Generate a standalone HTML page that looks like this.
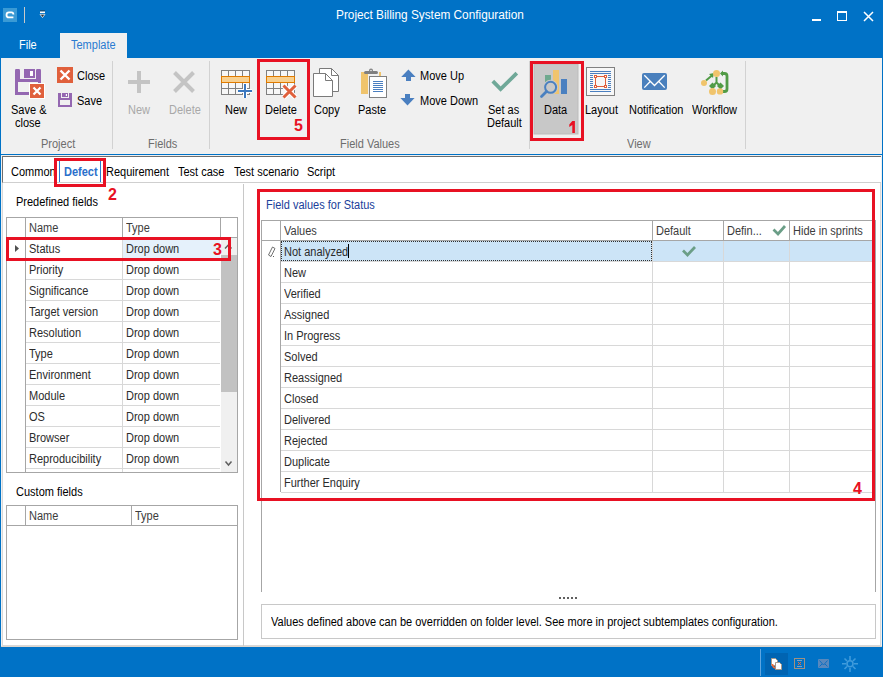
<!DOCTYPE html>
<html><head><meta charset="utf-8">
<style>
*{margin:0;padding:0;box-sizing:border-box}
html,body{width:883px;height:677px;overflow:hidden;background:#0072c6;font-family:"Liberation Sans",sans-serif}
.a{position:absolute}
.t{position:absolute;font-size:12px;line-height:15px;white-space:nowrap;color:#000;transform:scaleX(.917);transform-origin:0 0}
.r{position:absolute;border:3px solid #e81123}
.n{position:absolute;font-size:16px;line-height:16px;font-weight:bold;color:#e81123}
.hl{position:absolute;height:1px}
.vl{position:absolute;width:1px}
svg{position:absolute;overflow:visible}
</style></head><body>
<!-- title bar -->
<div class="a" style="left:3px;top:8px;width:14px;height:14px;background:#3a9ad5"></div>
<div class="vl" style="left:24px;top:7px;height:16px;background:#c9c9c9"></div>
<div class="t" style="left:336px;top:8px;font-size:12px;line-height:14px;color:#fff;transform:scaleX(.985)">Project Billing System Configuration</div>
<!-- min max close -->
<div class="a" style="left:812px;top:19px;width:9px;height:2px;background:#fff"></div>
<div class="a" style="left:837px;top:11px;width:10px;height:10px;border:1px solid #fff;border-top-width:2px"></div>
<!-- tabs -->
<div class="t" style="left:19px;top:38px;color:#fff">File</div>
<div class="a" style="left:60px;top:33px;width:67px;height:25px;background:#f0f0f0"></div>
<div class="t" style="left:71px;top:38px;color:#2a7bd0">Template</div>
<!-- ribbon body -->
<div class="a" style="left:1px;top:58px;width:881px;height:96px;background:#f0f0f0"></div>

<!-- ribbon icons -->
<svg style="left:0;top:0" width="883" height="155" viewBox="0 0 883 155">
 <!-- app icon glyph -->
 <path d="M13.4 14.6 Q13.4 12.4 11.4 12.4 H9 Q6.5 12.4 6.5 14.9 Q6.5 17.4 9 17.4 H13.4" fill="none" stroke="#fff" stroke-width="1.8"/>
 <!-- qat dropdown -->
 <rect x="40" y="10.5" width="5" height="1" fill="#333"/>
 <rect x="40" y="11.5" width="5" height="1.5" fill="#fff"/>
 <path d="M40 14.3 H45 L42.5 17.6 Z" fill="#333" stroke="#fff" stroke-width="0.7"/>
 <!-- close X title -->
 <path d="M864 12 L873 21 M873 12 L864 21" stroke="#fff" stroke-width="1.5"/>
 <!-- separators -->
 <rect x="112" y="61" width="1" height="88" fill="#d2d2d2"/>
 <rect x="209" y="61" width="1" height="88" fill="#d2d2d2"/>
 <rect x="529" y="61" width="1" height="88" fill="#d2d2d2"/>
 <rect x="745" y="61" width="1" height="88" fill="#d2d2d2"/>
 <!-- save & close -->
 <g fill="#9467b1">
  <rect x="15" y="69" width="5" height="13" rx="1.2"/><rect x="15" y="80" width="3" height="15"/>
  <rect x="15" y="79" width="26" height="3"/>
  <rect x="36" y="69" width="5" height="13" rx="1.2"/><rect x="38" y="80" width="3" height="5"/>
  <rect x="24" y="69" width="11" height="9"/>
  <rect x="15" y="92" width="16" height="3" rx="1"/>
 </g>
 <rect x="30" y="71" width="3" height="5" fill="#fff"/>
 <rect x="29" y="83" width="16" height="16" fill="#fff"/>
 <rect x="30" y="84" width="14" height="14" fill="#e0603c"/>
 <path d="M33.5 87.5 L40.5 94.5 M40.5 87.5 L33.5 94.5" stroke="#fff" stroke-width="2.2"/>
 <!-- close small -->
 <rect x="57" y="67" width="16" height="16" fill="#e0603c"/>
 <path d="M60.5 70.5 L69.5 79.5 M69.5 70.5 L60.5 79.5" stroke="#fff" stroke-width="2.4"/>
 <!-- save small -->
 <g fill="#9467b1">
  <rect x="58" y="93" width="3" height="5"/>
  <rect x="58" y="98" width="2" height="9"/>
  <rect x="62" y="93" width="6" height="4"/>
  <rect x="69" y="93" width="3" height="5"/>
  <rect x="70" y="98" width="2" height="9"/>
  <rect x="58" y="98" width="14" height="2"/>
  <rect x="58" y="105" width="14" height="2"/>
 </g>
 <rect x="65.8" y="94" width="1.2" height="2" fill="#fff"/>
 <!-- fields new/delete disabled -->
 <path d="M139 71 V93 M128 82 H150" stroke="#c4c4c4" stroke-width="4"/>
 <path d="M174.5 72.5 L193.5 91.5 M193.5 72.5 L174.5 91.5" stroke="#c4c4c4" stroke-width="4"/>
 <!-- grid new -->
 <g id="grid">
  <rect x="221.5" y="70.5" width="28" height="24" fill="#f7f7f7" stroke="#808080"/>
  <path d="M228.5 70 V95 M235.5 70 V95 M242.5 70 V95 M221 88.5 H250" stroke="#808080"/>
  <rect x="221.5" y="76.5" width="28" height="6" fill="#f8d08f" stroke="#e07b00"/>
 </g>
 <path d="M238 91 H252 M245 84 V98" stroke="#fff" stroke-width="4"/>
 <path d="M238 91 H252 M245 84 V98" stroke="#3b78bf" stroke-width="2"/>
 <!-- grid delete -->
 <use href="#grid" x="45"/>
 <path d="M283.5 85.5 L295.5 97.5 M295.5 85.5 L283.5 97.5" stroke="#fff" stroke-width="5"/>
 <path d="M283.5 85.5 L295.5 97.5 M295.5 85.5 L283.5 97.5" stroke="#e0603c" stroke-width="3"/>
 <!-- copy -->
 <path d="M319.5 68.5 H331.5 L338.5 75.5 V91.5 H319.5 Z" fill="#fff" stroke="#7a7a7a"/>
 <path d="M331.5 68.5 V75.5 H338.5" fill="none" stroke="#7a7a7a"/>
 <path d="M313.5 73.5 H325.5 L332.5 80.5 V96.5 H313.5 Z" fill="#fff" stroke="#7a7a7a"/>
 <path d="M325.5 73.5 V80.5 H332.5" fill="none" stroke="#7a7a7a"/>
 <!-- paste -->
 <rect x="361" y="72" width="7" height="22" fill="#f0c46c"/><rect x="379" y="72" width="2" height="4" fill="#f0c46c"/>
 <rect x="364" y="71" width="14" height="3" rx="1.5" fill="#808080"/>
 <circle cx="371" cy="70.5" r="2" fill="#808080"/>
 <circle cx="371" cy="70.5" r="0.8" fill="#f0f0f0"/>
 <rect x="369.5" y="76.5" width="17" height="21" fill="#fff" stroke="#808080"/>
 <path d="M373 81.5 H383 M373 83.5 H383 M373 85.5 H383 M373 87.5 H383 M373 89.5 H383 M373 91.5 H383" stroke="#4a7fc0"/>
 <!-- move up/down -->
 <path d="M408.4 69.4 L415.6 77 H411 V81 H406 V77 H401.2 Z" fill="#4a7fc0"/>
 <path d="M405 94 H410 V98 H414.6 L407.5 105.4 L400.4 98 H405 Z" fill="#4a7fc0"/>
 <!-- set as default check -->
 <path d="M492.8 81.1 L500.6 89.1 L516.8 73.2" fill="none" stroke="#6fa898" stroke-width="3.8"/>
 <!-- data pressed -->
 <rect x="534" y="64" width="44" height="70" fill="#c8c8c8" stroke="#bcbcbc"/>
 <rect x="545" y="75" width="6" height="10" fill="#6fa98e"/>
 <rect x="553" y="70" width="6" height="24" fill="#f0c46c"/>
 <rect x="561" y="79" width="6" height="15" fill="#4a80c0"/>
 <circle cx="550.6" cy="87.3" r="6.5" fill="none" stroke="#c8c8c8" stroke-width="2"/>
 <circle cx="550.6" cy="87.3" r="5.5" fill="#c8c8c8" stroke="#4a80c0" stroke-width="2"/>
 <path d="M541.5 96.5 L546.5 91.5" stroke="#4a80c0" stroke-width="2.8" stroke-linecap="round"/>
 <!-- layout -->
 <rect x="586.5" y="67.5" width="28" height="28" fill="#f7f7f7" stroke="#808080"/>
 <path d="M590 71.5 H611 M590 73.5 H611 M590 89.5 H611 M590 91.5 H611 M590 75.5 H593 M590 77.5 H593 M590 79.5 H593 M590 81.5 H593 M590 83.5 H593 M590 85.5 H593 M590 87.5 H593 M608 75.5 H611 M608 77.5 H611 M608 79.5 H611 M608 81.5 H611 M608 83.5 H611 M608 85.5 H611 M608 87.5 H611" stroke="#4a7fc0"/>
 <rect x="595.5" y="76.5" width="10" height="10" fill="none" stroke="#e0603c"/>
 <g fill="#fff" stroke="#e0603c"><rect x="594.5" y="75.5" width="2" height="2"/><rect x="604.5" y="75.5" width="2" height="2"/><rect x="594.5" y="85.5" width="2" height="2"/><rect x="604.5" y="85.5" width="2" height="2"/></g>
 <!-- envelope -->
 <rect x="642" y="73" width="25" height="17" rx="2" fill="#4a80bd"/>
 <path d="M644.3 75.2 L654.5 85.5 L664.7 75.2 M644.3 87.6 L650.2 81.5 M664.7 87.6 L658.8 81.5" fill="none" stroke="#fff" stroke-width="1.3"/>
 <!-- workflow -->
 <g stroke="#519b46" stroke-width="2" fill="none">
  <path d="M706 80.5 L712.5 75"/>
  <path d="M716.5 77 V82.5 L712.5 86.5 M716.5 82.5 L720.5 86.5"/>
  <path d="M722 91.5 H724.5 Q727 91.5 727 89 V76 Q727 73.5 724.5 73.5 H721.5" stroke-width="2.8"/>
 </g>
 <g fill="#519b46">
  <path d="M709 74 L714 73 L713 78 Z"/>
  <path d="M709 86 L712.5 89.5 L716 86 L712.5 82.5 Z"/>
  <path d="M717 86 L720.5 89.5 L724 86 L720.5 82.5 Z"/>
  <path d="M723 70.5 L720 73.5 L723 76.5 Z"/>
 </g>
 <g fill="#f0c46c">
  <circle cx="716.5" cy="73.5" r="3.5"/>
  <circle cx="704" cy="82.9" r="3"/>
  <circle cx="712.5" cy="91.4" r="3.5"/>
  <circle cx="720" cy="91.4" r="3.2"/>
 </g>
 <!-- red boxes ribbon -->
 <rect x="258.5" y="60.5" width="50" height="78" fill="none" stroke="#e81123" stroke-width="3"/>
 <rect x="531.5" y="62.5" width="51" height="77" fill="none" stroke="#e81123" stroke-width="3"/>
</svg>
<div class="t" style="left:77px;top:69px">Close</div>
<div class="t" style="left:77px;top:94px">Save</div>
<div class="t" style="left:11px;top:103px">Save &amp;</div>
<div class="t" style="left:15px;top:116px">close</div>
<div class="t" style="left:41px;top:137px;color:#6d6d6d">Project</div>
<div class="t" style="left:128px;top:103px;color:#a8a8a8">New</div>
<div class="t" style="left:169px;top:103px;color:#a8a8a8">Delete</div>
<div class="t" style="left:148px;top:137px;color:#6d6d6d">Fields</div>
<div class="t" style="left:225px;top:103px">New</div>
<div class="t" style="left:265px;top:103px">Delete</div>
<div class="t" style="left:314px;top:103px">Copy</div>
<div class="t" style="left:358px;top:103px">Paste</div>
<div class="t" style="left:420px;top:69px">Move Up</div>
<div class="t" style="left:420px;top:94px">Move Down</div>
<div class="t" style="left:488px;top:103px">Set as</div>
<div class="t" style="left:487px;top:116px">Default</div>
<div class="t" style="left:340px;top:137px;color:#6d6d6d">Field Values</div>
<div class="t" style="left:544px;top:103px">Data</div>
<div class="t" style="left:585px;top:103px">Layout</div>
<div class="t" style="left:629px;top:103px">Notification</div>
<div class="t" style="left:692px;top:103px">Workflow</div>
<div class="t" style="left:627px;top:137px;color:#6d6d6d">View</div>
<div class="n" style="left:294px;top:118px">5</div>
<svg style="left:0;top:0" width="883" height="160"><path d="M572.3 121 H574.9 V133 H572.3 V124.9 L569.3 126.9 V124.5 Z" fill="#e81123"/></svg>

<!-- content area -->
<div class="a" style="left:1px;top:155px;width:881px;height:492px;background:#f0f0f0"></div>
<div class="hl" style="left:1px;top:646px;width:881px;background:#ddd6ce"></div>
<div class="a" style="left:2px;top:156px;width:879px;height:27px;background:#fff;border-top:1px solid #6e6e6e;border-left:1px solid #6e6e6e;border-bottom:1px solid #cfcfcf"></div>
<div class="a" style="left:2px;top:183px;width:879px;height:463px;background:#fff;border-left:1px solid #d8d8d8;border-right:1px solid #d8d8d8;border-bottom:1px solid #d8d8d8"></div>
<!-- tab headers -->
<div class="t" style="left:11px;top:165px">Common</div>
<div class="vl" style="left:59px;top:161px;height:21px;background:#2a7bd0"></div>
<div class="vl" style="left:100px;top:161px;height:21px;background:#2a7bd0"></div>
<div class="t" style="left:64px;top:165px;color:#2a6fcb;font-weight:bold">Defect</div>
<div class="t" style="left:106px;top:165px">Requirement</div>
<div class="t" style="left:178px;top:165px">Test case</div>
<div class="t" style="left:234px;top:165px">Test scenario</div>
<div class="t" style="left:307px;top:165px">Script</div>
<div class="r" style="left:54px;top:158px;width:52px;height:29px"></div>
<div class="n" style="left:108px;top:187px">2</div>
<!-- splitter -->
<div class="vl" style="left:243px;top:184px;height:462px;background:#c8c8c8"></div>

<!-- left panel -->
<div class="t" style="left:16px;top:195px">Predefined fields</div>
<div class="t" style="left:16px;top:485px">Custom fields</div>

<!-- predefined grid -->
<div class="a" style="left:6px;top:217px;width:232px;height:256px;border:1px solid #a6a6a6;background:#fff"></div>
<div class="a" style="left:123px;top:238px;width:97px;height:20px;background:#e5f1fb"></div>
<div class="hl" style="left:7px;top:237px;width:230px;background:#a6a6a6"></div>
<div class="vl" style="left:25px;top:218px;height:254px;background:#a6a6a6"></div>
<div class="vl" style="left:122px;top:218px;height:19px;background:#a6a6a6"></div>
<div class="vl" style="left:220px;top:218px;height:19px;background:#a6a6a6"></div>
<div class="vl" style="left:122px;top:238px;height:234px;background:#d8d8d8"></div>
<div class="hl" style="left:26px;top:258px;width:194px;background:#d8d8d8"></div>
<div class="hl" style="left:26px;top:279px;width:194px;background:#d8d8d8"></div>
<div class="hl" style="left:26px;top:300px;width:194px;background:#d8d8d8"></div>
<div class="hl" style="left:26px;top:321px;width:194px;background:#d8d8d8"></div>
<div class="hl" style="left:26px;top:342px;width:194px;background:#d8d8d8"></div>
<div class="hl" style="left:26px;top:363px;width:194px;background:#d8d8d8"></div>
<div class="hl" style="left:26px;top:384px;width:194px;background:#d8d8d8"></div>
<div class="hl" style="left:26px;top:405px;width:194px;background:#d8d8d8"></div>
<div class="hl" style="left:26px;top:426px;width:194px;background:#d8d8d8"></div>
<div class="hl" style="left:26px;top:447px;width:194px;background:#d8d8d8"></div>
<div class="hl" style="left:26px;top:468px;width:194px;background:#d8d8d8"></div>
<div class="t" style="left:29px;top:221px;color:#3c3c3c">Name</div>
<div class="t" style="left:126px;top:221px;color:#3c3c3c">Type</div>
<div class="t" style="left:29px;top:242px;color:#2b2b2b">Status</div>
<div class="t" style="left:126px;top:242px;color:#2b2b2b">Drop down</div>
<div class="t" style="left:29px;top:263px;color:#2b2b2b">Priority</div>
<div class="t" style="left:126px;top:263px;color:#2b2b2b">Drop down</div>
<div class="t" style="left:29px;top:284px;color:#2b2b2b">Significance</div>
<div class="t" style="left:126px;top:284px;color:#2b2b2b">Drop down</div>
<div class="t" style="left:29px;top:305px;color:#2b2b2b">Target version</div>
<div class="t" style="left:126px;top:305px;color:#2b2b2b">Drop down</div>
<div class="t" style="left:29px;top:326px;color:#2b2b2b">Resolution</div>
<div class="t" style="left:126px;top:326px;color:#2b2b2b">Drop down</div>
<div class="t" style="left:29px;top:347px;color:#2b2b2b">Type</div>
<div class="t" style="left:126px;top:347px;color:#2b2b2b">Drop down</div>
<div class="t" style="left:29px;top:368px;color:#2b2b2b">Environment</div>
<div class="t" style="left:126px;top:368px;color:#2b2b2b">Drop down</div>
<div class="t" style="left:29px;top:389px;color:#2b2b2b">Module</div>
<div class="t" style="left:126px;top:389px;color:#2b2b2b">Drop down</div>
<div class="t" style="left:29px;top:410px;color:#2b2b2b">OS</div>
<div class="t" style="left:126px;top:410px;color:#2b2b2b">Drop down</div>
<div class="t" style="left:29px;top:431px;color:#2b2b2b">Browser</div>
<div class="t" style="left:126px;top:431px;color:#2b2b2b">Drop down</div>
<div class="t" style="left:29px;top:452px;color:#2b2b2b">Reproducibility</div>
<div class="t" style="left:126px;top:452px;color:#2b2b2b">Drop down</div>
<div class="a" style="left:221px;top:238px;width:16px;height:234px;background:#f0f0f0"></div>
<div class="a" style="left:221px;top:255px;width:16px;height:137px;background:#c2c2c2"></div>
<svg style="left:0;top:0" width="883" height="677"><path d="M225 248.5 L228.3 245 L231.5 248.5" fill="none" stroke="#606060" stroke-width="1.5"/><path d="M225.5 461.5 L228.5 465 L231.5 461.5" fill="none" stroke="#606060" stroke-width="1.5"/><path d="M15 245 L19 248.5 L15 252 Z" fill="#505050"/></svg>
<div class="r" style="left:6px;top:237px;width:225px;height:24px"></div>
<div class="n" style="left:213px;top:242px">3</div>
<!-- custom grid -->
<div class="a" style="left:6px;top:505px;width:232px;height:135px;border:1px solid #a6a6a6;background:#fff"></div>
<div class="hl" style="left:7px;top:525px;width:230px;background:#a6a6a6"></div>
<div class="vl" style="left:25px;top:506px;height:19px;background:#a6a6a6"></div>
<div class="vl" style="left:131px;top:506px;height:19px;background:#a6a6a6"></div>
<div class="t" style="left:29px;top:509px;color:#3c3c3c">Name</div>
<div class="t" style="left:135px;top:509px;color:#3c3c3c">Type</div>
<!-- right panel -->
<!-- values grid -->
<div class="vl" style="left:261px;top:220px;height:372px;background:#a6a6a6"></div>
<div class="vl" style="left:875px;top:220px;height:372px;background:#a6a6a6"></div>
<div class="hl" style="left:261px;top:220px;width:615px;background:#a6a6a6"></div>
<div class="a" style="left:281px;top:241px;width:591px;height:20px;background:#cce4f7"></div>
<div class="hl" style="left:262px;top:240px;width:610px;background:#a6a6a6"></div>
<div class="vl" style="left:280px;top:221px;height:271px;background:#a6a6a6"></div>
<div class="vl" style="left:652px;top:221px;height:19px;background:#a6a6a6"></div>
<div class="vl" style="left:652px;top:241px;height:251px;background:#d8d8d8"></div>
<div class="vl" style="left:723px;top:221px;height:19px;background:#a6a6a6"></div>
<div class="vl" style="left:723px;top:241px;height:251px;background:#d8d8d8"></div>
<div class="vl" style="left:789px;top:221px;height:19px;background:#a6a6a6"></div>
<div class="vl" style="left:789px;top:241px;height:251px;background:#d8d8d8"></div>
<div class="hl" style="left:281px;top:261px;width:591px;background:#d8d8d8"></div>
<div class="hl" style="left:281px;top:282px;width:591px;background:#d8d8d8"></div>
<div class="hl" style="left:281px;top:303px;width:591px;background:#d8d8d8"></div>
<div class="hl" style="left:281px;top:324px;width:591px;background:#d8d8d8"></div>
<div class="hl" style="left:281px;top:345px;width:591px;background:#d8d8d8"></div>
<div class="hl" style="left:281px;top:366px;width:591px;background:#d8d8d8"></div>
<div class="hl" style="left:281px;top:387px;width:591px;background:#d8d8d8"></div>
<div class="hl" style="left:281px;top:408px;width:591px;background:#d8d8d8"></div>
<div class="hl" style="left:281px;top:429px;width:591px;background:#d8d8d8"></div>
<div class="hl" style="left:281px;top:450px;width:591px;background:#d8d8d8"></div>
<div class="hl" style="left:281px;top:471px;width:591px;background:#d8d8d8"></div>
<div class="hl" style="left:281px;top:492px;width:591px;background:#d8d8d8"></div>
<div class="a" style="left:281px;top:241px;width:371px;height:20px;border:1px dotted #303030"></div>
<div class="t" style="left:284px;top:224px;color:#3c3c3c">Values</div>
<div class="t" style="left:656px;top:224px;color:#3c3c3c">Default</div>
<div class="t" style="left:727px;top:224px;color:#3c3c3c">Defin...</div>
<div class="t" style="left:793px;top:224px;color:#3c3c3c">Hide in sprints</div>
<div class="t" style="left:284px;top:245px;color:#2b2b2b">Not analyzed</div>
<div class="t" style="left:284px;top:266px;color:#2b2b2b">New</div>
<div class="t" style="left:284px;top:287px;color:#2b2b2b">Verified</div>
<div class="t" style="left:284px;top:308px;color:#2b2b2b">Assigned</div>
<div class="t" style="left:284px;top:329px;color:#2b2b2b">In Progress</div>
<div class="t" style="left:284px;top:350px;color:#2b2b2b">Solved</div>
<div class="t" style="left:284px;top:371px;color:#2b2b2b">Reassigned</div>
<div class="t" style="left:284px;top:392px;color:#2b2b2b">Closed</div>
<div class="t" style="left:284px;top:413px;color:#2b2b2b">Delivered</div>
<div class="t" style="left:284px;top:434px;color:#2b2b2b">Rejected</div>
<div class="t" style="left:284px;top:455px;color:#2b2b2b">Duplicate</div>
<div class="t" style="left:284px;top:476px;color:#2b2b2b">Further Enquiry</div>
<div class="vl" style="left:348px;top:244px;height:14px;background:#000"></div>
<svg style="left:0;top:0" width="883" height="677"><path d="M683 250.5 L687.5 255 L695 247" fill="none" stroke="#6b9e87" stroke-width="2.7"/><path d="M773.5 229.5 L778 234 L785 226" fill="none" stroke="#6b9e87" stroke-width="2.7"/><path d="M272.5 247 L275 248.5 L271 256.5 L268.5 255 Z" fill="none" stroke="#606060" stroke-width="0.9"/><rect x="273" y="256" width="1" height="1" fill="#606060"/></svg>
<div class="a" style="left:257px;top:189px;width:618px;height:312px;border:3px solid #e81123"></div>
<div class="n" style="left:853px;top:481px">4</div>
<div class="a" style="left:559px;top:597px;width:2px;height:2px;background:#606060"></div>
<div class="a" style="left:563px;top:597px;width:2px;height:2px;background:#606060"></div>
<div class="a" style="left:567px;top:597px;width:2px;height:2px;background:#606060"></div>
<div class="a" style="left:571px;top:597px;width:2px;height:2px;background:#606060"></div>
<div class="a" style="left:575px;top:597px;width:2px;height:2px;background:#606060"></div>
<div class="t" style="left:266px;top:198px;color:#20409a">Field values for Status</div>
<div class="a" style="left:261px;top:604px;width:615px;height:35px;border:1px solid #c8c8c8"></div>
<div class="t" style="left:271px;top:615px">Values defined above can be overridden on folder level. See more in project subtemplates configuration.</div>

<!-- status bar -->
<svg style="left:0;top:640px" width="883" height="37" viewBox="0 640 883 37">
 <rect x="760" y="649" width="1" height="27" fill="#5ea5e0"/>
 <rect x="765" y="653" width="23" height="22" fill="#0064b2"/>
 <path d="M771.5 658.5 H775.5 L777.5 660.5 V665.5 H771.5 Z" fill="#fff" stroke="#a89888"/>
 <path d="M775.5 662.5 H779.5 L781.5 664.5 V669.5 H775.5 Z" fill="#fff" stroke="#a89888"/>
 <path d="M772.5 664 Q772.5 667 775 668" fill="none" stroke="#f06a35" stroke-width="1.5"/>
 <rect x="794.5" y="658.5" width="10" height="10" fill="none" stroke="#a09080"/>
 <path d="M797 660.5 H802 M797 666.5 H802" stroke="#7aa0c8"/>
 <path d="M798 662 L801 665 M801 662 L798 665" stroke="#f06a35" stroke-width="1"/>
 <rect x="818" y="659" width="11" height="9" rx="1" fill="#5888bd"/>
 <path d="M819.5 660.5 L823.5 665 L827.5 660.5 M819.5 666.5 L822 664 M827.5 666.5 L825 664" fill="none" stroke="#0e6fc2" stroke-width="1"/>
 <g fill="none" stroke="#3f9bdc" stroke-width="1.6">
  <circle cx="850" cy="663.8" r="3"/>
  <path d="M850 656 V660 M850 668 V672 M842 663.8 H846 M854 663.8 H858 M844.5 658.5 L847 661 M855.5 658.5 L853 661 M844.5 669 L847 666.5 M855.5 669 L853 666.5"/>
 </g>
</svg>
</body></html>
